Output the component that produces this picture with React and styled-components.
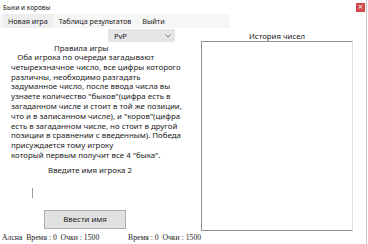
import React from "react";
import styled, { createGlobalStyle } from "styled-components";

const Global = createGlobalStyle`
  html, body { margin: 0; padding: 0; background: #fff; }
  body { width: 368px; height: 244px; overflow: hidden; }
`;

const Window = styled.div`
  position: relative;
  width: 366px;
  height: 244px;
  border-right: 1px solid #c9c9c9;
  background: #fff;
  font-family: "Noto Sans", "Liberation Sans", sans-serif;
  color: #1a1a1a;
  display: flex;
  flex-direction: column;
`;

const TitleBar = styled.div`
  height: 14px;
  display: flex;
  align-items: center;
  justify-content: space-between;
  padding-left: 3px;
  font-size: 6.5px;
  color: #222;
`;

const CloseBtn = styled.div`
  width: 9px;
  height: 9px;
  margin-right: 1px;
  margin-top: 1px;
  background: #d2474a;
  color: #fff;
  font-size: 7px;
  line-height: 9px;
  text-align: center;
  font-family: "DejaVu Sans", sans-serif;
`;

const MenuBar = styled.div`
  height: 14px;
  width: 230px;
  display: flex;
  align-items: center;
  background: #f6f6f6;
  font-size: 7.2px;
`;

const MenuItem = styled.div`
  padding: 0 5px;
  margin-left: ${(p) => p.$ml}px;
  height: 14px;
  line-height: 14px;
  background: ${(p) => (p.$active ? "#eeeeee" : "transparent")};
`;

const Body = styled.div`
  flex: 1;
  display: grid;
  grid-template-columns: 201px 152px;
`;

const Left = styled.div`
  display: flex;
  flex-direction: column;
  font-size: 7.9px;
`;

const Select = styled.div`
  margin-top: 1px;
  margin-left: 108px;
  width: 67px;
  height: 13px;
  background: #e5e5e5;
  display: flex;
  align-items: center;
  justify-content: space-between;
  padding: 0 4px 0 6px;
  box-sizing: border-box;
  font-size: 7.5px;
`;

const RulesTitle = styled.div`
  margin-top: 1px;
  padding-left: 54px;
  line-height: 10px;
`;

const Rules = styled.div`
  white-space: pre;
  padding-left: 11px;
  line-height: 9.8px;
`;

const Prompt = styled.div`
  padding-left: 48px;
  margin-top: 4px;
  line-height: 10px;
`;

const Caret = styled.div`
  margin-left: 32px;
  margin-top: 13px;
  width: 1px;
  height: 10px;
  background: #9a9a9a;
`;

const Button = styled.div`
  margin-left: 44px;
  margin-top: 12px;
  width: 82px;
  height: 19px;
  box-sizing: border-box;
  border: 1px solid #adadad;
  background: #e1e1e1;
  display: flex;
  align-items: center;
  justify-content: center;
  font-size: 7.8px;
`;

const Right = styled.div`
  display: flex;
  flex-direction: column;
`;

const HistoryLabel = styled.div`
  text-align: center;
  font-size: 7.8px;
  line-height: 10px;
  margin-top: 3px;
`;

const HistoryBox = styled.div`
  width: 152px;
  height: 190px;
  box-sizing: border-box;
  border: 1px solid #8f8f8f;
  border-right-color: #e0e0e0;
`;

const Status = styled.div`
  position: absolute;
  left: 2px;
  top: 233px;
  font-family: "Liberation Serif", serif;
  font-size: 7.7px;
  display: flex;
  color: #222;
`;

const StatusPart = styled.span`
  width: ${(p) => p.$w}px;
  white-space: pre;
`;

const Grip = styled.div`
  position: absolute;
  right: 0px;
  bottom: 1px;
  width: 7px;
  height: 7px;
  background-image: radial-gradient(#b5b5b5 0.6px, transparent 0.7px);
  background-size: 2px 2px;
`;

const rules = `   Оба игрока по очереди загадывают
четырехзначное число, все цифры которого
различны, необходимо разгадать
задуманное число, после ввода числа вы
узнаете количество "быков"(цифра есть в
загаданном числе и стоит в той же позиции,
что и в записанном числе), и "коров"(цифра
есть в загаданном числе, но стоит в другой
позиции в сравнении с введенным). Победа
присуждается тому игроку
который первым получит все 4 "быка".`;

export default function App() {
  return (
    <>
      <Global />
      <Window>
        <TitleBar>
          <span>Быки и коровы</span>
          <CloseBtn>×</CloseBtn>
        </TitleBar>
        <MenuBar>
          <MenuItem $ml={3} $active>Новая игра</MenuItem>
          <MenuItem $ml={1}>Таблица результатов</MenuItem>
          <MenuItem $ml={1}>Выйти</MenuItem>
        </MenuBar>
        <Body>
          <Left>
            <Select>
              <span>PvP</span>
              <svg width="6" height="4" viewBox="0 0 6 4">
                <path d="M0.5 0.5 L3 3 L5.5 0.5" fill="none" stroke="#555" strokeWidth="0.8" />
              </svg>
            </Select>
            <RulesTitle>Правила игры</RulesTitle>
            <Rules>{rules}</Rules>
            <Prompt>Введите имя игрока 2</Prompt>
            <Caret />
            <Button>Ввести имя</Button>
          </Left>
          <Right>
            <HistoryLabel>История чисел</HistoryLabel>
            <HistoryBox />
          </Right>
        </Body>
        <Status>
          <StatusPart $w={126}>Алсна  Время : 0  Очки : 1500</StatusPart>
          <StatusPart>Время : 0  Очки : 1500</StatusPart>
        </Status>
        <Grip />
      </Window>
    </>
  );
}
